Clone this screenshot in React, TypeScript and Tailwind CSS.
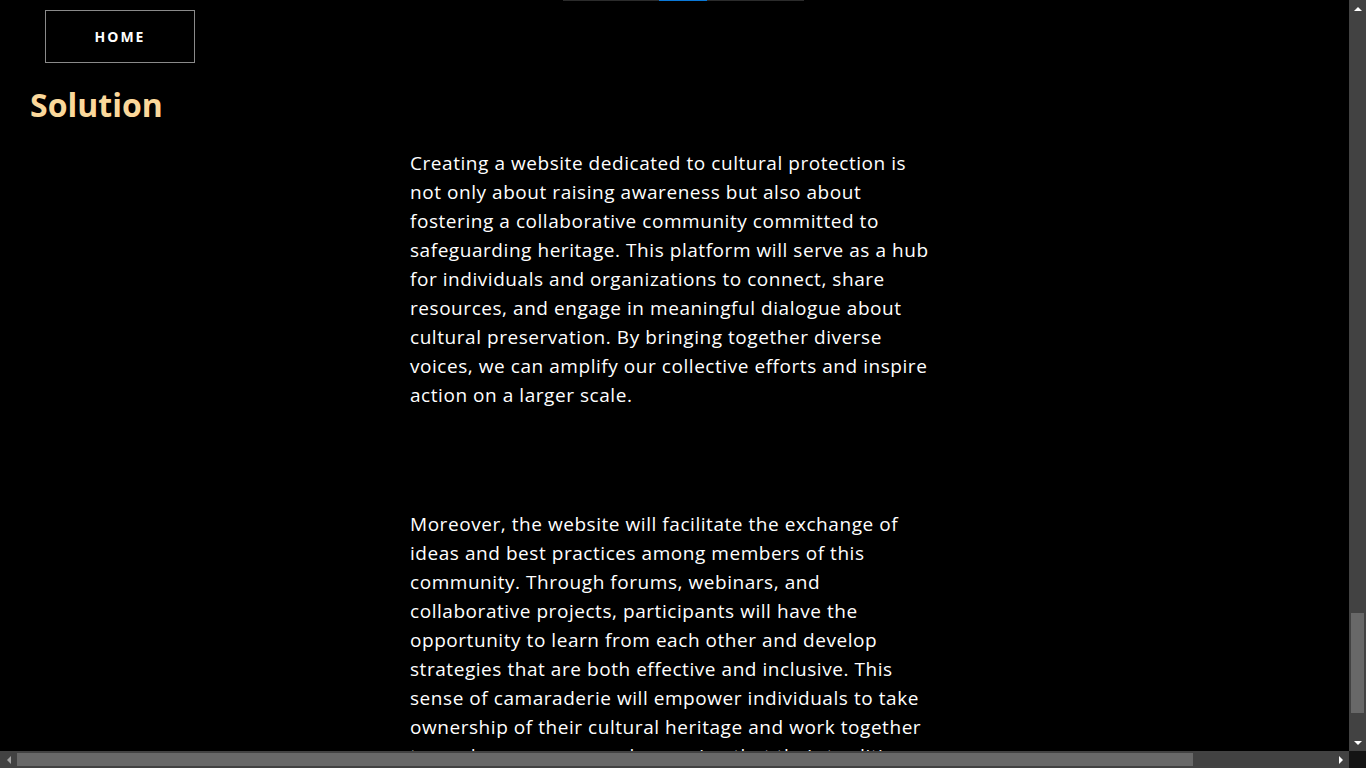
const firstLines = [
  "Creating a website dedicated to cultural protection is",
  "not only about raising awareness but also about",
  "fostering a collaborative community committed to",
  "safeguarding heritage. This platform will serve as a hub",
  "for individuals and organizations to connect, share",
  "resources, and engage in meaningful dialogue about",
  "cultural preservation. By bringing together diverse",
  "voices, we can amplify our collective efforts and inspire",
  "action on a larger scale.",
];

const secondLines = [
  "Moreover, the website will facilitate the exchange of",
  "ideas and best practices among members of this",
  "community. Through forums, webinars, and",
  "collaborative projects, participants will have the",
  "opportunity to learn from each other and develop",
  "strategies that are both effective and inclusive. This",
  "sense of camaraderie will empower individuals to take",
  "ownership of their cultural heritage and work together",
  "towards a common goal, ensuring that their traditions",
];

function Paragraph({ lines }: { lines: string[] }) {
  return (
    <p className="text-[19px] leading-[29px] tracking-[0.55px] text-white">
      {lines.map((line) => (
        <span key={line} className="block whitespace-nowrap">
          {line}
        </span>
      ))}
    </p>
  );
}

function VerticalScrollbar() {
  return (
    <div className="flex w-[17px] shrink-0 flex-col bg-[#424242]">
      {/* up */}
      <div className="flex h-[17px] items-center justify-center">
        <div className="h-0 w-0 border-x-[4px] border-b-[4px] border-x-transparent border-b-white" />
      </div>

      <div className="flex flex-1 flex-col justify-end px-[2px] pb-[21px]">
        <div className="h-[100px] bg-[#686868]" />
      </div>

      {/* down */}
      <div className="flex h-[17px] items-center justify-center">
        <div className="h-0 w-0 border-x-[4px] border-t-[4px] border-x-transparent border-t-white" />
      </div>
    </div>
  );
}

function HorizontalScrollbar() {
  return (
    <div className="flex h-[17px] shrink-0 bg-[#424242]">
      {/* left */}
      <div className="flex w-[17px] items-center justify-center">
        <div className="h-0 w-0 border-y-[4px] border-r-[4px] border-y-transparent border-r-[#a3a3a3]" />
      </div>

      <div className="flex flex-1 items-center py-[2px]">
        <div className="h-full w-[1176px] bg-[#686868]" />
      </div>

      {/* right */}
      <div className="flex w-[17px] items-center justify-center">
        <div className="h-0 w-0 border-y-[4px] border-l-[4px] border-y-transparent border-l-white" />
      </div>

      {/* corner */}
      <div className="w-[17px] bg-[#141414]" />
    </div>
  );
}

export default function App() {
  return (
    <div className="flex h-screen w-screen flex-col overflow-hidden bg-black font-['Open_Sans',sans-serif]">
      <div className="flex min-h-0 flex-1">
        <main className="min-w-0 flex-1 overflow-hidden">
          {/* Progress line */}
          <div className="ml-[563px] flex h-px w-[241px]">
            <div className="w-[96px] bg-[#2b2b2b]" />
            <div className="w-[48px] bg-[#0a78d7]" />
            <div className="flex-1 bg-[#2b2b2b]" />
          </div>

          {/* Home button */}
          <div className="ml-[45px] mt-[9px] flex h-[53px] w-[150px] items-center justify-center border border-[#8a8a8a] text-[14px] font-bold tracking-[2px] text-white">
            HOME
          </div>

          {/* Heading */}
          <h1 className="ml-[30px] mt-[18px] text-[32px] font-bold leading-[48px] text-[#fbd89b]">
            Solution
          </h1>

          {/* Body */}
          <div className="ml-[410px] mt-[20px] space-y-[100px]">
            <Paragraph lines={firstLines} />
            <Paragraph lines={secondLines} />
          </div>
        </main>

        <VerticalScrollbar />
      </div>

      <HorizontalScrollbar />
    </div>
  );
}
